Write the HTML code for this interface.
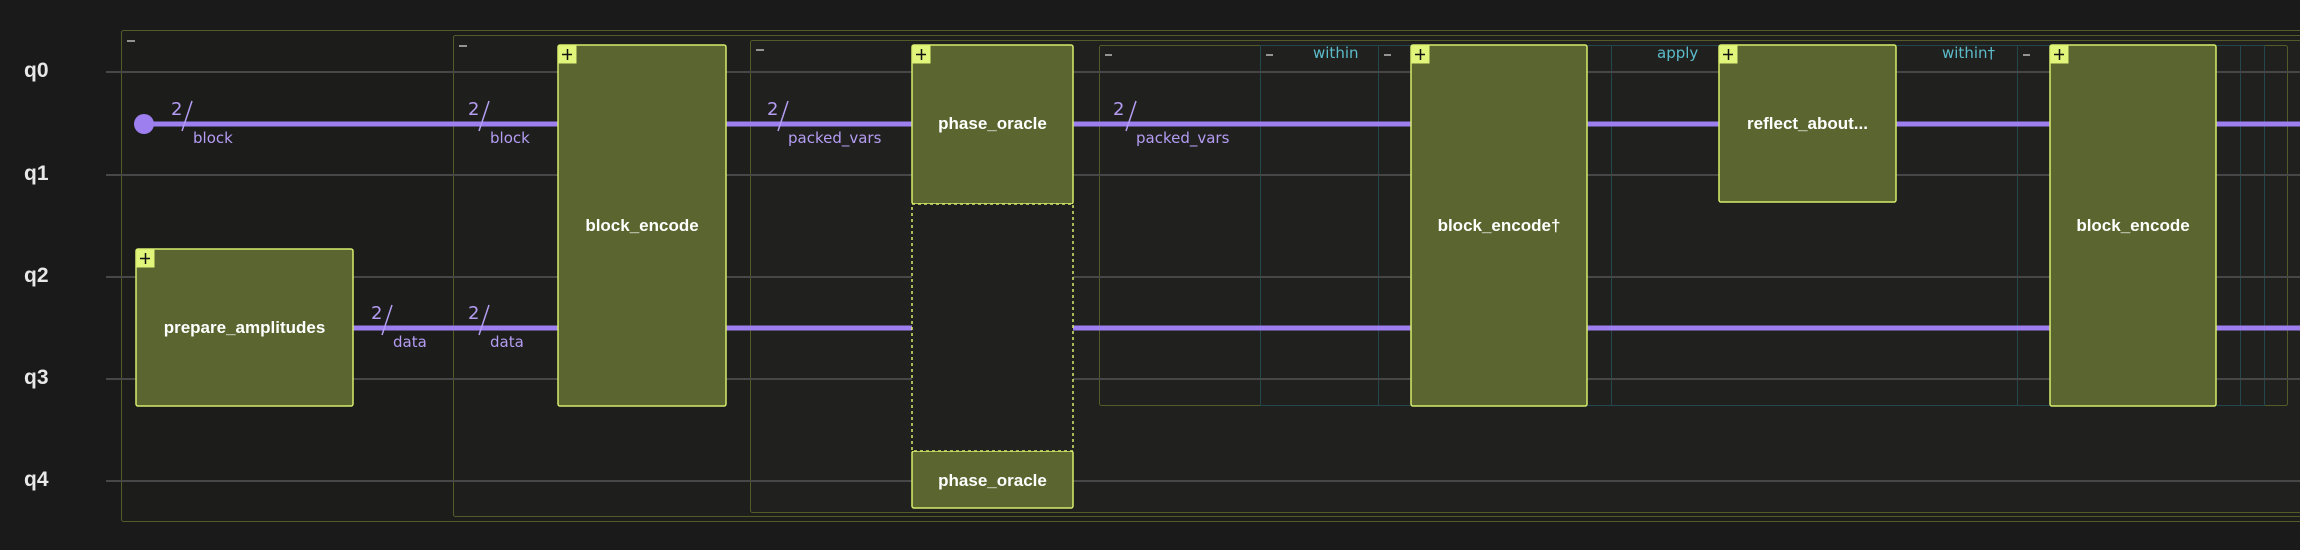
<!DOCTYPE html>
<html><head><meta charset="utf-8"><style>
html,body{margin:0;padding:0;background:#1a1a1a;width:2300px;height:550px;overflow:hidden}
svg{display:block}
.q{font:bold 21px "Liberation Sans",sans-serif;fill:#e8e8e8}
.g{font:bold 17px "Liberation Sans",sans-serif;fill:#fff}
.l{font:15px "DejaVu Sans",sans-serif;fill:#b49cf3}
.n{font:18px "DejaVu Sans",sans-serif;fill:#b49cf3}
.t{font:15px "DejaVu Sans",sans-serif;fill:#5cbccc}
.m{stroke:#bbb;stroke-width:1.5}
</style></head><body>
<svg width="2300" height="550" xmlns="http://www.w3.org/2000/svg">
<rect width="2300" height="550" fill="#1a1a1a"/>
<rect x="121.5" y="30.5" width="2200" height="491" rx="2" fill="#1c1c1b" stroke="#555b28"/>
<rect x="453.5" y="35.5" width="1900" height="481" rx="2" fill="#1e1f1c" stroke="#555b28"/>
<rect x="750.5" y="40.5" width="1600" height="472" rx="2" fill="#20211e" stroke="#555b28"/>
<rect x="1099.5" y="45.5" width="1188" height="360" rx="2" fill="#20211e" stroke="#555b28"/>
<rect x="1260.5" y="45.5" width="1004" height="360" fill="none" stroke="#24474e"/>
<g stroke="#24474e">
<line x1="1378.5" y1="45" x2="1378.5" y2="406"/>
<line x1="1611.5" y1="45" x2="1611.5" y2="406"/>
<line x1="2017.5" y1="45" x2="2017.5" y2="406"/>
<line x1="2240.5" y1="45" x2="2240.5" y2="406"/>
</g>
<g stroke="#474747" stroke-width="2">
<line x1="106" y1="72" x2="2300" y2="72"/>
<line x1="106" y1="175" x2="2300" y2="175"/>
<line x1="106" y1="277" x2="2300" y2="277"/>
<line x1="106" y1="379" x2="2300" y2="379"/>
<line x1="106" y1="481" x2="2300" y2="481"/>
</g>
<text class="q" x="24" y="77">q0</text>
<text class="q" x="24" y="180">q1</text>
<text class="q" x="24" y="282">q2</text>
<text class="q" x="24" y="384">q3</text>
<text class="q" x="24" y="486">q4</text>
<g stroke="#9d7ff0" stroke-width="5">
<line x1="144" y1="124" x2="2300" y2="124"/>
<line x1="353" y1="328" x2="2300" y2="328"/>
</g>
<circle cx="144" cy="124" r="10" fill="#9d7ff0"/>
<g class="n">
<text x="171" y="115">2</text><text x="468" y="115">2</text>
<text x="371" y="319">2</text><text x="468" y="319">2</text>
<text x="767" y="115">2</text><text x="1113" y="115">2</text>
</g>
<g class="l">
<text x="193" y="143">block</text>
<text x="490" y="143">block</text>
<text x="393" y="347">data</text>
<text x="490" y="347">data</text>
<text x="788" y="143">packed_vars</text>
<text x="1136" y="143">packed_vars</text>
</g>
<g stroke="#b49cf3" stroke-width="1.5">
<line x1="192" y1="101" x2="182" y2="131"/>
<line x1="489" y1="101" x2="479" y2="131"/>
<line x1="392" y1="305" x2="382" y2="335"/>
<line x1="489" y1="305" x2="479" y2="335"/>
<line x1="788" y1="101" x2="778" y2="131"/>
<line x1="1136" y1="101" x2="1126" y2="131"/>
</g>
<g class="m">
<line x1="127" y1="41" x2="135" y2="41"/>
<line x1="459" y1="46" x2="467" y2="46"/>
<line x1="756" y1="50" x2="764" y2="50"/>
<line x1="1105" y1="55" x2="1112" y2="55"/>
<line x1="1266" y1="55" x2="1273" y2="55"/>
<line x1="1384" y1="55" x2="1391" y2="55"/>
<line x1="2023" y1="55" x2="2030" y2="55"/>
</g>
<text class="t" x="1313" y="58">within</text>
<text class="t" x="1657" y="58">apply</text>
<text class="t" x="1942" y="58">within†</text>
<g fill="#5a652f" stroke="#d6ec6c" stroke-width="1.5">
<rect x="136" y="249" width="217" height="157" rx="2"/>
<rect x="558" y="45" width="168" height="361" rx="2"/>
<rect x="912" y="45" width="161" height="159" rx="2"/>
<rect x="912" y="451" width="161" height="57" rx="2"/>
<rect x="1411" y="45" width="176" height="361" rx="2"/>
<rect x="1719" y="45" width="177" height="157" rx="2"/>
<rect x="2050" y="45" width="166" height="361" rx="2"/>
</g>
<rect x="912" y="204" width="161" height="247" fill="#20211e" stroke="#d6ec6c" stroke-width="1.5" stroke-dasharray="3,3"/>
<g fill="#e0f57a">
<rect x="136.5" y="249.5" width="18" height="18"/>
<rect x="558.5" y="45.5" width="18" height="18"/>
<rect x="912.5" y="45.5" width="18" height="18"/>
<rect x="1411.5" y="45.5" width="18" height="18"/>
<rect x="1719.5" y="45.5" width="18" height="18"/>
<rect x="2050.5" y="45.5" width="18" height="18"/>
</g>
<g stroke="#111" stroke-width="1.5">
<path d="M140 258.5h10M145.5 253v11"/>
<path d="M562 54.5h10M567.5 49v11"/>
<path d="M916 54.5h10M921.5 49v11"/>
<path d="M1415 54.5h10M1420.5 49v11"/>
<path d="M1723 54.5h10M1728.5 49v11"/>
<path d="M2054 54.5h10M2059.5 49v11"/>
</g>
<g class="g" text-anchor="middle">
<text x="244.5" y="333">prepare_amplitudes</text>
<text x="642" y="231">block_encode</text>
<text x="992.5" y="129">phase_oracle</text>
<text x="992.5" y="486">phase_oracle</text>
<text x="1499" y="231">block_encode†</text>
<text x="1807.5" y="129">reflect_about...</text>
<text x="2133" y="231">block_encode</text>
</g>
</svg>
</body></html>
